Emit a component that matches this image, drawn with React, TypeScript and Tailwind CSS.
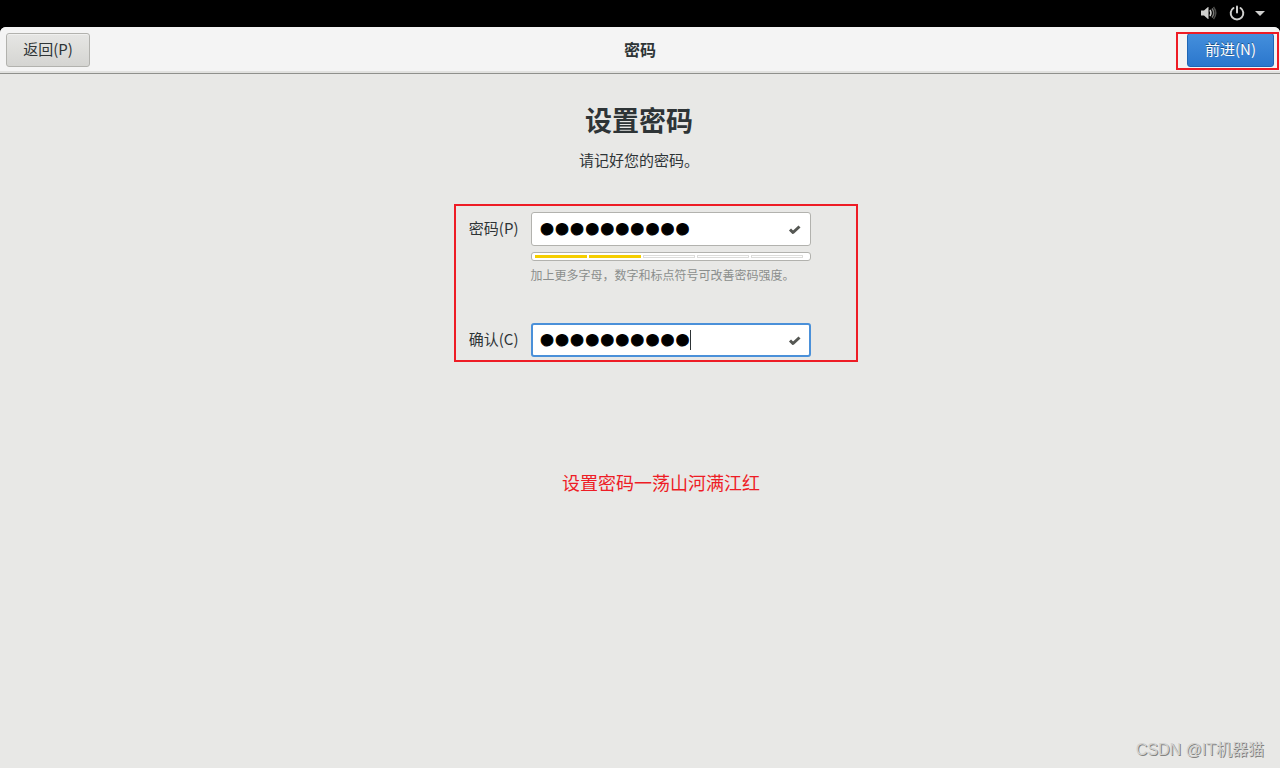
import { type ReactNode } from "react";

const PASSWORD = "password10";
const STRENGTH = 2;

function StatusBar() {
  return (
    <div className="flex h-[27px] items-center justify-end gap-2 bg-black pr-3 pb-px text-[#d0d0ce]">
      <svg width="18" height="16" viewBox="0 0 18 16" fill="none" aria-hidden="true">
        <path d="M1 5.500h3L8 2h.5v12H8L4 10.500H1z" fill="currentColor" />
        <path d="M10 5q2 3 0 6" stroke="currentColor" strokeWidth="1.5" />
        <path d="M12 3.500q3.500 4.500 0 9" stroke="#7a7a78" strokeWidth="1.5" />
        <path d="M13.500 2q4.500 6 0 12" stroke="#4c4c4a" strokeWidth="1.5" />
      </svg>
      <svg className="ml-[3px]" width="16" height="16" viewBox="0 0 16 16" fill="none" stroke="currentColor" strokeWidth="2" strokeLinecap="round" aria-hidden="true">
        <path d="M4.500 3a6.300 6.300 0 1 0 7 0" />
        <path d="M8 1.500v6" />
      </svg>
      <svg className="-ml-px" width="16" height="16" viewBox="0 0 16 16" fill="currentColor" aria-hidden="true">
        <path d="M3 6h10l-5 5z" />
      </svg>
    </div>
  );
}

function Header() {
  return (
    <header className="grid h-[47px] grid-cols-3 items-center rounded-t-md border-b border-[#8f908c] bg-[#f4f4f4] px-[6px] pb-px shadow-[inset_0_-2px_0_#e1e1df]">
      <button
        type="button"
        className="h-[34px] w-[84px] justify-self-start rounded-[3px] border border-[#b2b2ae] bg-linear-to-b from-[#e6e6e4] to-[#d5d5d2] pb-[2px] shadow-[inset_0_1px_0_#f0f0ef]"
      >
        返回(P)
      </button>
      <h1 className="pb-[2px] text-center text-[16px] font-bold">密码</h1>
      <div className="relative justify-self-end">
        <button
          type="button"
          className="block h-[34px] w-[87px] rounded-[3px] border border-[#1f66b5] bg-linear-to-b from-[#448fdc] to-[#2b77cd] pb-[2px] text-white [text-shadow:0_-1px_0_#1c5187]"
        >
          前进(N)
        </button>
        <div className="pointer-events-none absolute -top-px -right-[5px] -bottom-[3px] -left-[11px] border-2 border-[#ee1c25]" />
      </div>
    </header>
  );
}

function CheckMark() {
  return (
    <svg className="absolute top-[11px] right-[10px]" width="13" height="13" viewBox="0 0 13 13" fill="none" aria-hidden="true">
      <path d="M2 6.500l3 3 6.500-6" stroke="#555753" strokeWidth="3" strokeLinejoin="round" />
    </svg>
  );
}

function PasswordField({ id, focused, children }: { id: string; focused?: boolean; children?: ReactNode }) {
  return (
    <div className="relative">
      <input
        id={id}
        type="password"
        defaultValue={PASSWORD}
        className={
          focused
            ? "block h-[34px] w-full rounded-[3px] border-2 border-[#4a90d9] bg-white pr-8 pb-[2px] pl-[7px] font-['Liberation_Sans',sans-serif] text-[43px] text-black outline-none [-webkit-text-stroke:1px_black]"
            : "block h-[34px] w-full rounded-[3px] border border-[#b2b2ae] bg-white pr-8 pb-[2px] pl-2 font-['Liberation_Sans',sans-serif] text-[43px] text-black outline-none [-webkit-text-stroke:1px_black]"
        }
      />
      {children}
      <CheckMark />
    </div>
  );
}

function StrengthMeter() {
  return (
    <div
      role="meter"
      aria-label="密码强度"
      aria-valuemin={0}
      aria-valuemax={5}
      aria-valuenow={STRENGTH}
      className="mt-[6px] grid h-[9px] grid-cols-5 items-center gap-[2px] rounded-[3px] border border-[#b2b2ae] bg-white pr-[7px] pl-[3px]"
    >
      {[0, 1, 2, 3, 4].map((i) => (
        <div key={i} className={i < STRENGTH ? "h-[3px] bg-[#f5ce00]" : "h-[3px] border border-[#dcdcda]"} />
      ))}
    </div>
  );
}

export default function App() {
  return (
    <div className="flex min-h-screen flex-col bg-black font-['Noto_Sans_CJK_SC',sans-serif] text-[15px] leading-5 text-[#2e3436]">
      <StatusBar />
      <div className="flex flex-1 flex-col rounded-t-md bg-[#e8e8e6]">
        <Header />
        <main className="flex flex-1 flex-col items-center pr-[2px]">
          <h2 className="mt-7 text-[27px] leading-9 font-bold">设置密码</h2>
          <p className="mt-3">请记好您的密码。</p>

          <form className="relative mt-[42px] grid grid-cols-[51px_280px] gap-x-3">
            <label htmlFor="password" className="pt-[6px] text-right whitespace-nowrap">
              密码(P)
            </label>
            <div>
              <PasswordField id="password" />
              <StrengthMeter />
              <p className="mt-1 text-[12px] leading-5 whitespace-nowrap text-[#8b8e8c]">
                加上更多字母，数字和标点符号可改善密码强度。
              </p>
            </div>
            <label htmlFor="confirm" className="mt-[38px] pt-[6px] text-right whitespace-nowrap">
              确认(C)
            </label>
            <div className="mt-[38px]">
              <PasswordField id="confirm" focused>
                <span className="absolute top-[7px] left-[159px] h-5 w-px bg-[#2e3436]" />
              </PasswordField>
            </div>
            <div className="pointer-events-none absolute -top-2 -right-[47px] -bottom-[5px] -left-[14px] border-2 border-[#ee1c25]" />
          </form>

          <p className="mt-28 pl-11 text-[18px] leading-[26px] text-[#ee1c25]">设置密码一荡山河满江红</p>
        </main>
        <footer className="flex justify-end px-4 pb-2 font-['Liberation_Sans','Noto_Sans_CJK_SC',sans-serif] text-[16px] text-[#d2d2d0] [text-shadow:1px_1px_0_#848482]">
          CSDN @IT机器猫
        </footer>
      </div>
    </div>
  );
}
